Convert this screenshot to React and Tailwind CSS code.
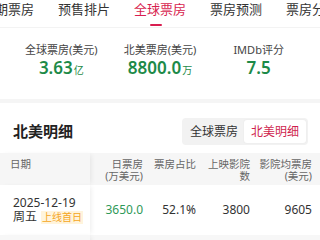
import React from "react";

const tabs = ["近期票房", "预售排片", "全球票房", "票房预测", "票房分析"];

const stats = [
  { label: "全球票房(美元)", value: "3.63", unit: "亿" },
  { label: "北美票房(美元)", value: "8800.0", unit: "万" },
  { label: "IMDb评分", value: "7.5", unit: "" },
];

const font = { fontFamily: '"Noto Sans", "Noto Sans CJK SC", sans-serif' };

export default function App() {
  return (
    <div
      className="w-[320px] h-[240px] overflow-hidden bg-white text-[#333]"
      style={font}
    >
      {/* Tabs */}
      <div className="h-[28px] border-b border-[#f3f3f3] overflow-hidden">
        <div className="flex gap-[24px] ml-[-18px] pt-[1px] whitespace-nowrap">
          {tabs.map((t) => {
            const active = t === "全球票房";
            return (
              <div key={t} className="flex flex-col items-center shrink-0">
                <span
                  className={
                    "text-[13px] leading-[16px] " +
                    (active ? "text-[#d81e50]" : "text-[#333]")
                  }
                >
                  {t}
                </span>
                {active && (
                  <span className="mt-[7px] mr-[8px] w-[12px] h-[2px] rounded-full bg-[#d81e50]" />
                )}
              </div>
            );
          })}
        </div>
      </div>

      {/* Stats */}
      <div className="grid grid-cols-3 px-[12px] pt-[15px] pb-[18px]">
        {stats.map((s) => (
          <div key={s.label} className="flex flex-col items-center">
            <span className="text-[11px] leading-[14px] text-[#444]">
              {s.label}
            </span>
            <span className="flex items-baseline leading-[22px] text-[#1d8a48]">
              <span className="text-[17px] font-semibold">{s.value}</span>
              {s.unit && <span className="text-[10px] ml-[1px]">{s.unit}</span>}
            </span>
          </div>
        ))}
      </div>

      <div className="h-[4px] bg-[#f5f5f5]" />

      {/* Section header */}
      <div className="flex items-center justify-between pl-[13px] pr-[12px] pt-[15px] pb-[8px]">
        <span className="text-[15px] font-bold text-[#222]">北美明细</span>
        <div className="flex bg-[#f2f2f2] rounded-[4px] p-[2px] text-[12px] leading-[23px]">
          <span className="w-[60px] text-center text-[#333]">全球票房</span>
          <span className="w-[62px] text-center bg-white rounded-[3px] text-[#cf1f4f] shadow-[0_0_2px_rgba(0,0,0,0.06)]">
            北美明细
          </span>
        </div>
      </div>

      {/* Table */}
      <div className="text-[10.5px] leading-[12px] text-[#666]">
        <div className="flex h-[32px] bg-[#f6f6f6]">
          <div className="w-[90px] pl-[10px] pt-[5px] bg-[#f6f6f6] relative z-10 shadow-[3px_0_5px_-2px_rgba(0,0,0,0.08)]">
            日期
          </div>
          <div className="w-[57px] pr-[4px] pt-[5px] text-right">
            日票房
            <br />
            (万美元)
          </div>
          <div className="w-[53px] pr-[4px] pt-[5px] text-right">票房占比</div>
          <div className="w-[54px] pr-[4px] pt-[5px] text-right">
            上映影院
            <br />
            数
          </div>
          <div className="w-[62px] pr-[4px] pt-[5px] text-right">
            影院均票房
            <br />
            (美元)
          </div>
        </div>

        <div className="flex items-center h-[50px] bg-white text-[12px] text-[#333]">
          <div className="w-[90px] h-full pl-[13px] flex flex-col justify-center bg-white relative z-10 shadow-[3px_0_5px_-2px_rgba(0,0,0,0.08)]">
            <span className="leading-[14px]">2025-12-19</span>
            <span className="flex items-center leading-[14px]">
              周五
              <span className="ml-[4px] px-[1px] text-[10px] leading-[13px] bg-[#fff4dc] text-[#f5a623]">
                上线首日
              </span>
            </span>
          </div>
          <div className="w-[57px] pr-[4px] text-right text-[#2f9958]">3650.0</div>
          <div className="w-[53px] pr-[4px] text-right">52.1%</div>
          <div className="w-[54px] pr-[4px] text-right">3800</div>
          <div className="w-[62px] pr-[4px] text-right">9605</div>
        </div>

        <div className="flex items-center h-[50px] bg-[#f7f7f7] text-[12px] text-[#333]">
          <div className="w-[90px] h-full pl-[13px] flex flex-col justify-center bg-[#f7f7f7] relative z-10 shadow-[3px_0_5px_-2px_rgba(0,0,0,0.08)]">
            <span className="leading-[14px]">2025-12-20</span>
            <span className="leading-[14px]">周六</span>
          </div>
          <div className="w-[57px] pr-[4px] text-right text-[#2f9958]">2860.0</div>
          <div className="w-[53px] pr-[4px] text-right">48.3%</div>
          <div className="w-[54px] pr-[4px] text-right">3800</div>
          <div className="w-[62px] pr-[4px] text-right">7526</div>
        </div>
      </div>
    </div>
  );
}
